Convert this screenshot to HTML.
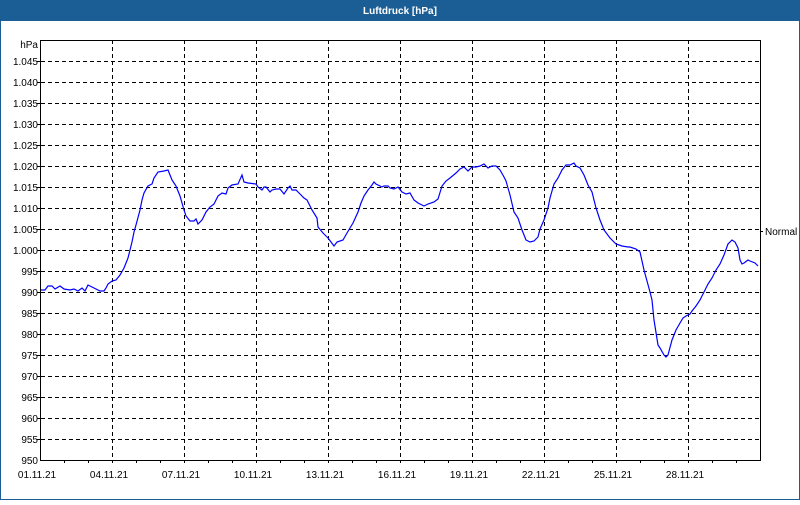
<!DOCTYPE html>
<html><head><meta charset="utf-8"><style>
html,body{margin:0;padding:0;background:#fff}
body{width:800px;height:500px;overflow:hidden;font-family:"Liberation Sans",sans-serif}
</style></head><body>
<svg width="800" height="500" xmlns="http://www.w3.org/2000/svg" font-family="'Liberation Sans', sans-serif" font-size="10">
<rect x="0" y="0" width="800" height="500" fill="#fff"/>
<rect x="0" y="0" width="800" height="21" fill="#1b5e96"/>
<rect x="0" y="0" width="1" height="500" fill="#1b5e96"/>
<rect x="799" y="0" width="1" height="500" fill="#1b5e96"/>
<rect x="0" y="499" width="800" height="1" fill="#1b5e96"/>
<text x="400" y="14" fill="#fff" font-weight="bold" font-size="10" text-anchor="middle">Luftdruck [hPa]</text>
<g stroke="#000" stroke-width="1" stroke-dasharray="4,3" shape-rendering="crispEdges">
<line x1="41" y1="61.5" x2="760" y2="61.5"/><line x1="41" y1="82.5" x2="760" y2="82.5"/><line x1="41" y1="103.5" x2="760" y2="103.5"/><line x1="41" y1="124.5" x2="760" y2="124.5"/><line x1="41" y1="145.5" x2="760" y2="145.5"/><line x1="41" y1="166.5" x2="760" y2="166.5"/><line x1="41" y1="187.5" x2="760" y2="187.5"/><line x1="41" y1="208.5" x2="760" y2="208.5"/><line x1="41" y1="229.5" x2="760" y2="229.5"/><line x1="41" y1="250.5" x2="760" y2="250.5"/><line x1="41" y1="271.5" x2="760" y2="271.5"/><line x1="41" y1="292.5" x2="760" y2="292.5"/><line x1="41" y1="313.5" x2="760" y2="313.5"/><line x1="41" y1="334.5" x2="760" y2="334.5"/><line x1="41" y1="355.5" x2="760" y2="355.5"/><line x1="41" y1="376.5" x2="760" y2="376.5"/><line x1="41" y1="397.5" x2="760" y2="397.5"/><line x1="41" y1="418.5" x2="760" y2="418.5"/><line x1="41" y1="439.5" x2="760" y2="439.5"/>
<line x1="112.5" y1="40" x2="112.5" y2="460"/><line x1="184.5" y1="40" x2="184.5" y2="460"/><line x1="256.5" y1="40" x2="256.5" y2="460"/><line x1="328.5" y1="40" x2="328.5" y2="460"/><line x1="400.5" y1="40" x2="400.5" y2="460"/><line x1="472.5" y1="40" x2="472.5" y2="460"/><line x1="544.5" y1="40" x2="544.5" y2="460"/><line x1="616.5" y1="40" x2="616.5" y2="460"/><line x1="688.5" y1="40" x2="688.5" y2="460"/>
</g>
<g stroke="#000" stroke-width="1" fill="none" shape-rendering="crispEdges">
<line x1="40.5" y1="40" x2="40.5" y2="461"/><line x1="40" y1="40.5" x2="761" y2="40.5"/><line x1="760.5" y1="40" x2="760.5" y2="461"/><line x1="40" y1="460.5" x2="761" y2="460.5"/>
<path d="M64.5 460v3M88.5 460v3M112.5 460v3M136.5 460v3M160.5 460v3M184.5 460v3M208.5 460v3M232.5 460v3M256.5 460v3M280.5 460v3M304.5 460v3M328.5 460v3M352.5 460v3M376.5 460v3M400.5 460v3M424.5 460v3M448.5 460v3M472.5 460v3M496.5 460v3M520.5 460v3M544.5 460v3M568.5 460v3M592.5 460v3M616.5 460v3M640.5 460v3M664.5 460v3M688.5 460v3M712.5 460v3M736.5 460v3"/>
<path d="M37 61.5h3M37 82.5h3M37 103.5h3M37 124.5h3M37 145.5h3M37 166.5h3M37 187.5h3M37 208.5h3M37 229.5h3M37 250.5h3M37 271.5h3M37 292.5h3M37 313.5h3M37 334.5h3M37 355.5h3M37 376.5h3M37 397.5h3M37 418.5h3M37 439.5h3M760 231.5h3"/>
</g>
<g fill="#000" text-anchor="end" font-size="10">
<text x="38" y="48">hPa</text>
<text x="38" y="65">1.045</text><text x="38" y="86">1.040</text><text x="38" y="107">1.035</text><text x="38" y="128">1.030</text><text x="38" y="149">1.025</text><text x="38" y="170">1.020</text><text x="38" y="191">1.015</text><text x="38" y="212">1.010</text><text x="38" y="233">1.005</text><text x="38" y="254">1.000</text><text x="38" y="275">995</text><text x="38" y="296">990</text><text x="38" y="317">985</text><text x="38" y="338">980</text><text x="38" y="359">975</text><text x="38" y="380">970</text><text x="38" y="401">965</text><text x="38" y="422">960</text><text x="38" y="443">955</text><text x="38" y="464">950</text>
</g>
<text x="765" y="235" font-size="10" fill="#000">Normal</text>
<g fill="#000" text-anchor="middle" font-size="10">
<text x="37" y="478">01.11.21</text><text x="109" y="478">04.11.21</text><text x="181" y="478">07.11.21</text><text x="253" y="478">10.11.21</text><text x="325" y="478">13.11.21</text><text x="397" y="478">16.11.21</text><text x="469" y="478">19.11.21</text><text x="541" y="478">22.11.21</text><text x="613" y="478">25.11.21</text><text x="685" y="478">28.11.21</text>
</g>
<polyline fill="none" stroke="#0000ff" stroke-width="1.2" points="41,290 45,290 48,286 52,286 55,289 60,286 64,289 70,290 74,289 78,291 82,288 85,291 88,285 92,287 96,289 100,291 104,291 106,288 108,284 112,281 116,280 120,275 124,268 128,258 130,250 132,242 134,232 136,225 140,210 142,200 144,193 148,186 152,184 154,178 158,172 164,171 168,170 172,180 176,186 180,196 184,210 186,216 190,221 194,221 196,219 198,224 202,220 206,212 210,207 214,204 218,196 222,193 226,194 228,188 232,185 238,184 242,175 244,182 248,183 256,184 258,187 262,190 264,187 266,187 270,192 272,190 276,189 280,189 284,194 288,188 290,186 292,190 296,190 300,194 304,198 307,200 312,210 317,218 318,227 323,233 328,238 334,246 337,242 343,240 347,233 353,223 358,212 361,203 364,196 368,190 372,185 374,182 376,184 380,186 382,187 384,186 388,186 390,188 394,189 398,187 402,192 406,194 410,193 414,200 418,203 424,206 428,204 434,202 438,199 442,186 446,181 450,178 456,173 460,169 464,167 468,171 472,167 476,167 480,166 484,164 488,168 492,166 496,166 500,170 504,177 506,181 510,195 514,212 518,218 522,230 526,240 530,242 534,241 538,237 540,229 544,220 548,208 550,198 554,184 558,178 562,170 566,165 570,165 574,163 576,166 580,168 584,175 588,185 592,192 596,208 600,220 604,230 610,238 616,244 622,246 628,247 630,247 636,249 640,252 644,270 650,292 652,300 654,320 658,345 660,348 664,355 666,357 668,355 672,340 676,330 680,323 683,318 686,316 690,314 692,311 696,306 700,300 704,292 708,284 712,278 716,270 720,264 724,255 728,244 732,240 735,242 738,248 740,260 742,264 744,263 748,260 750,261 755,263 758,266"/>
</svg>
</body></html>
